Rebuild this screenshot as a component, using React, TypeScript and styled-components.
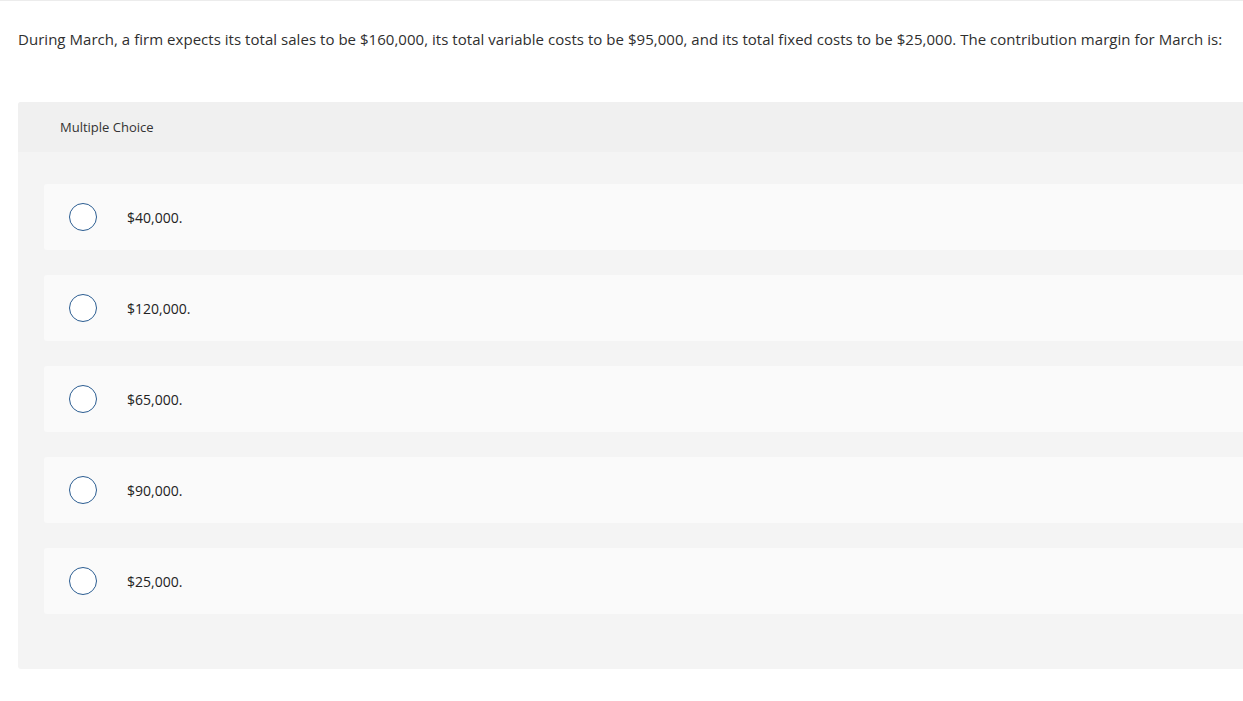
import React from "react";
import styled, { createGlobalStyle } from "styled-components";

const GlobalStyle = createGlobalStyle`
    html, body {
        margin: 0;
        padding: 0;
        background: #ffffff;
        overflow: hidden;
    }
    body {
        font-family: "Open Sans", Lato, "Liberation Sans", sans-serif;
        color: #333333;
    }
`;

const Page = styled.div`
    width: 1243px;
    height: 701px;
    overflow: hidden;
    border-top: 1px solid #ececec;
    box-sizing: border-box;
`;

const Question = styled.p`
    margin: 0;
    padding: 28px 0 0 18px;
    font-size: 15px;
    line-height: 20px;
    letter-spacing: 0.035px;
    color: #2f2f2f;
    white-space: nowrap;
`;

const Panel = styled.section`
    margin: 53px 0 0 18px;
    width: 1260px;
    background: #f4f4f4;
    border-radius: 3px;
    padding-bottom: 55px;
`;

const PanelHeader = styled.div`
    height: 50px;
    background: #f0f0f0;
    border-radius: 3px 3px 0 0;
    display: flex;
    align-items: center;
    padding-left: 42px;
    font-size: 13px;
    color: #333333;
`;

const Options = styled.div`
    display: flex;
    flex-direction: column;
    gap: 25px;
    padding: 32px 0 0 26px;
`;

const Option = styled.label`
    height: 66px;
    background: #fafafa;
    border-radius: 3px;
    display: flex;
    align-items: center;
    padding-left: 25px;
    cursor: pointer;
`;

const Radio = styled.span`
    width: 28px;
    height: 28px;
    box-sizing: border-box;
    border-radius: 50%;
    border: 1.5px solid #2b5d91;
    background: #ffffff;
    flex: none;
`;

const OptionText = styled.span`
    margin-left: 30px;
    font-size: 14px;
    color: #222222;
`;

const choices = ["$40,000.", "$120,000.", "$65,000.", "$90,000.", "$25,000."];

export default function App() {
    return (
        <>
            <GlobalStyle />
            <Page>
                <Question>
                    During March, a firm expects its total sales to be $160,000, its total variable costs to be $95,000, and its total fixed costs to be $25,000. The contribution margin for March is:
                </Question>
                <Panel>
                    <PanelHeader>Multiple Choice</PanelHeader>
                    <Options>
                        {choices.map((choice) => (
                            <Option key={choice}>
                                <Radio />
                                <OptionText>{choice}</OptionText>
                            </Option>
                        ))}
                    </Options>
                </Panel>
            </Page>
        </>
    );
}
